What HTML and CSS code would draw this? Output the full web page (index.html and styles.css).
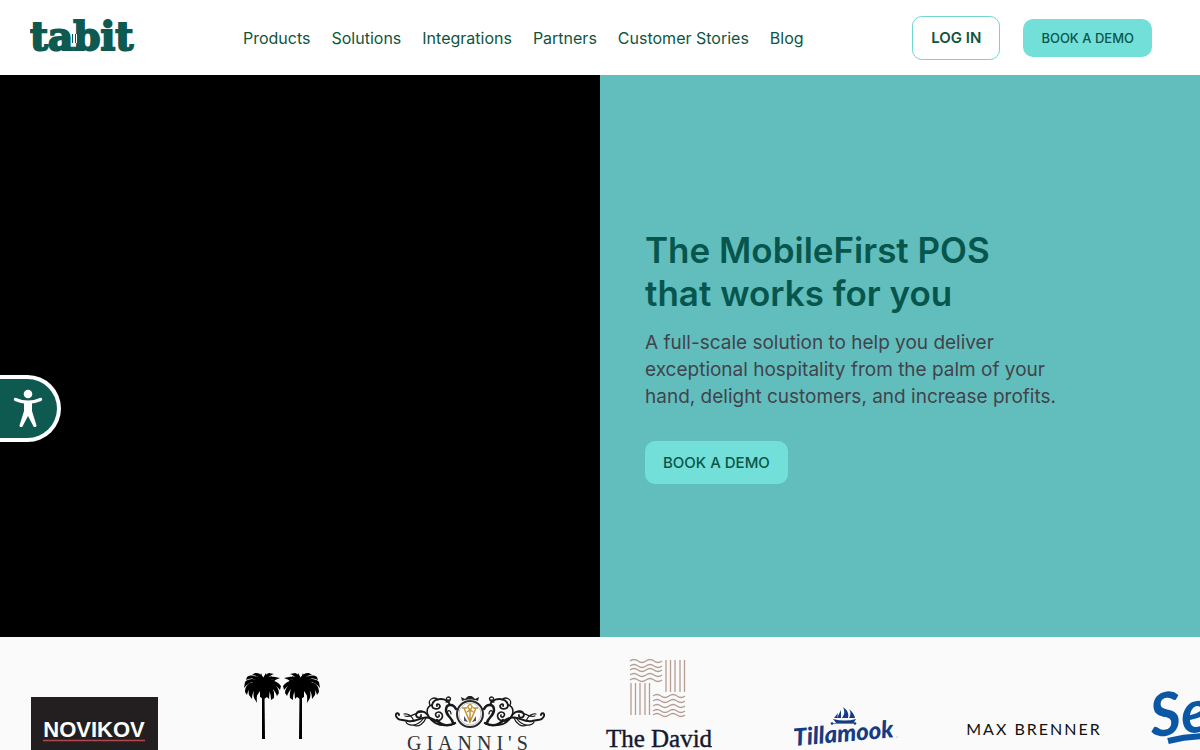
FILE: index.html
```html
<!DOCTYPE html>
<html lang="en">
<head>
    <meta charset="UTF-8">
    <meta name="viewport" content="width=device-width, initial-scale=1.0">
    <title>Tabit</title>
    <link rel="stylesheet" href="styles.css">
</head>
<body>
    <header class="header">
        <a class="logo" href="#" aria-label="tabit">
            <svg width="106" height="38" viewBox="0 0 106 38">
                <text class="logo-text" x="0" y="31">tabit</text>
                <path d="M44 15v9" stroke="#fff" stroke-width="6"/>
                <path d="M42.500 15v9M45.500 15v9" stroke="#0e5a51" stroke-width="1"/>
            </svg>
        </a>
        <nav class="nav">
            <a href="#">Products</a>
            <a href="#">Solutions</a>
            <a href="#">Integrations</a>
            <a href="#">Partners</a>
            <a href="#">Customer Stories</a>
            <a href="#">Blog</a>
        </nav>
        <div class="actions">
            <button class="btn btn-login">LOG IN</button>
            <button class="btn btn-small">BOOK A DEMO</button>
        </div>
    </header>

    <section class="hero">
        <div class="hero-video"></div>
        <div class="hero-text">
            <h1>The MobileFirst POS<br>that works for you</h1>
            <p>A full-scale solution to help you deliver<br>exceptional hospitality from the palm of your<br>hand, delight customers, and increase profits.</p>
            <button class="btn btn-demo">BOOK A DEMO</button>
        </div>
    </section>

    <section class="clients">
        <!-- Novikov -->
        <div class="client">
            <svg width="127" height="62" viewBox="0 0 127 62">
                <rect width="127" height="62" fill="#231f20"/>
                <text class="novikov" x="63" y="40" text-anchor="middle">NOVIKOV</text>
                <path d="M12 43.500h102" stroke="#b5474c" stroke-width="1.500"/>
            </svg>
        </div>
        <!-- Palms -->
        <div class="client">
            <svg width="76" height="112" viewBox="0 0 76 112">
                <defs>
                    <g id="palm">
                        <path d="M18 22h2.500l.5 45h-3z"/>
                        <circle cx="19" cy="14" r="6"/>
                        <path d="M16 16h7v9l-3 2-4-2z"/>
                        <path d="M19 15C18 7 14 3 8 3l3-2C17 0 21 6 22 14z"/>
                        <path d="M18 14C12 6 7 5 2 8l1-3C9 1 17 6 21 14z"/>
                        <path d="M19 13C12 9 5 9 0 16l1-6C6 5 14 7 21 12z"/>
                        <path d="M19 14C11 11 5 14 3 23L1 20C1 11 9 8 20 12z"/>
                        <path d="M19 15C12 13 8 19 8 27l-3-4C3 15 9 10 19 12z"/>
                        <path d="M20 15C14 15 12 23 13 31l-3-5C8 18 12 12 19 13z"/>
                        <path d="M18 15C18 7 20 3 25 1l5 1C24 4 22 8 22 15z"/>
                        <path d="M19 13C21 6 26 4 31 5l5 1-5 2C26 7 23 10 21 14z"/>
                        <path d="M19 13C26 6 32 8 37 14l-1 4C31 12 27 11 20 15z"/>
                        <path d="M19 13C28 8 34 13 35 21l-2 3C30 16 26 13 20 15z"/>
                        <path d="M19 14C27 12 31 18 30 26l-3 2C27 21 25 16 20 16z"/>
                        <path d="M19 15C24 14 26 20 25 27l-3-3z"/>
                        <path d="M13 6L11 4l5 1 1-4 2 5 3-5 1 5 5-2-2 4 6-1-3 4 7 1-5 2 4 5-6-3 1 7-4-5-1 6-3-5-4 8-2-8-4 6-1-7-5 4 2-6-6 1 5-4-6-1 7-1z"/>
                    </g>
                </defs>
                <use href="#palm"/>
                <use href="#palm" transform="translate(76 0) scale(-1 1)"/>
            </svg>
        </div>
        <!-- Gianni's -->
        <div class="client">
            <svg width="150" height="64" viewBox="0 0 150 64">
                <defs>
                    <g id="scroll" fill="none" stroke="#18181a" stroke-linecap="round">
                        <path stroke-width="2.500" d="M89 13C92 7 99 8 99 14C99 20 93 21 92 27M90 27C97 31 105 29 108 24"/>
                        <path stroke-width="1.800" d="M95 9C98 1 111 1 113 9C113 14 105 14 105 10C106 7 109 8 108 10"/>
                        <path stroke-width="1.300" d="M99 6C94 6 93 1 97 1C100 2 98 5 96 4M107 4C110 0 118 3 115 9"/>
                        <path stroke-width="1.800" d="M91 28C103 31 111 29 116 21C120 14 128 13 129 19C128 23 123 22 124 19"/>
                        <path stroke-width="1.600" d="M113 9C120 11 119 20 113 24C107 27 101 23 103 18C106 14 111 17 109 20C108 22 105 21 106 19"/>
                        <path stroke-width="2" d="M110 24C122 17 127 27 137 25C144 23 147 25 149 20C150 17 146 16 146 19"/>
                        <path stroke-width="1.200" d="M120 16C130 15 132 22 140 20M122 23C128 31 137 30 139 26M131 25C133 20 137 17 141 18M94 18C94 13 99 14 97 18M119 22C121 27 126 32 132 29"/>
                    </g>
                </defs>
                <use href="#scroll"/>
                <use href="#scroll" transform="translate(150 0) scale(-1 1)"/>
                <path d="M67 5l-1-4 4 2 2-2 3-2 3 2 2 2 4-2-1 4c-5-2-11-2-16 0z" fill="#222"/>
                <circle cx="75" cy="18" r="13" fill="#fff" stroke="#29292b" stroke-width="2"/>
                <circle cx="75" cy="18" r="11" fill="none" stroke="#999" stroke-width=".6"/>
                <path d="M67 12h5M78 12h5M69 12l6 14 6-14M75 15v10M75 8c-5 4 0 5 3 8M75 8c5 4 0 5-3 8" fill="none" stroke="#c39335" stroke-width="1.500"/>
                <path d="M69 20v5l4 1zM81 20v5l-4 1z" fill="#555269"/>
                <text class="giannis" x="12" y="54">GIANNI'S</text>
            </svg>
        </div>
        <!-- The David -->
        <div class="client">
            <svg width="108" height="138" viewBox="0 0 108 138">
                <g fill="none" stroke="#b49e94" stroke-width="1.300">
                    <path id="wave" d="M26 2q4-3 8 0t8 0 8 0 8 0"/>
                    <use href="#wave" y="5"/>
                    <use href="#wave" y="9"/>
                    <use href="#wave" y="14"/>
                    <use href="#wave" y="19"/>
                    <use href="#wave" x="23" y="35"/>
                    <use href="#wave" x="23" y="40"/>
                    <use href="#wave" x="23" y="45"/>
                    <use href="#wave" x="23" y="50"/>
                    <use href="#wave" x="23" y="54"/>
                    <path d="M62 1v32M66.500 1v32M71 1v32M76 1v32M80.500 1v32"/>
                    <path d="M27 24v32M31.500 24v32M36 24v32M41 24v32M45.500 24v32"/>
                </g>
                <text class="david" x="55" y="88" text-anchor="middle">The David</text>
            </svg>
        </div>
        <!-- Tillamook -->
        <div class="client">
            <svg width="104" height="42" viewBox="0 0 104 42">
                <g fill="#153b83">
                    <path d="M39 12q12 3 23 0l-3 5H43z"/>
                    <path d="M43 11l4-8v8zM48 11q4-5 1-11 7 5 5 11zM55 11q3-5 0-9 5 4 6 9zM40 11l4-5-1 5z"/>
                    <path d="M38 16h23v1H38z" fill="#7186af"/>
                    <circle cx="38" cy="16.500" r="1.300"/>
                    <circle cx="61" cy="16.500" r="1.300"/>
                </g>
                <text class="tillamook" x="0" y="39" transform="rotate(-5 0 39)">Tillamook</text>
                <circle cx="103" cy="30" r=".6" fill="#8b9abb"/>
            </svg>
        </div>
        <!-- Max Brenner -->
        <div class="client">
            <span class="brenner">MAX BRENNER</span>
        </div>
        <div class="client">
            <svg width="144" height="80" viewBox="0 0 144 80">
                <text class="script-logo" x="2" y="49" transform="rotate(-6 2 49)">Se</text>
                <path d="M18 53Q46 46 78 49" fill="none" stroke="#0957a5" stroke-width="6"/>
            </svg>
        </div>
    </section>

    <button class="accessibility" aria-label="Accessibility">
        <svg width="30" height="40" viewBox="0 0 30 40">
            <circle cx="15" cy="5" r="4.300" fill="#fff"/>
            <path d="M2.500 10.500Q15 16 27.500 10.500" fill="none" stroke="#fff" stroke-width="3.400" stroke-linecap="round"/>
            <path d="M11 12h8v10l4.500 14.500c0 2-3 2-3.500 0L15 27l-5 9.500c-.5 2-3.500 2-3.500 0L11 22z" fill="#fff"/>
        </svg>
    </button>
</body>
</html>
```

FILE: styles.css
```css
* {
  box-sizing: border-box;
}

body {
  margin: 0;
  font-family: Inter, "Open Sans", sans-serif;
  background-color: #fff;
  color: #0e5a51;
}

.header {
  display: flex;
  align-items: center;
  height: 75px;
  padding: 0 48px 0 30px;
}

.logo {
  display: flex;
}

.logo-text {
  font-family: "DejaVu Serif", serif;
  font-weight: bold;
  font-size: 39px;
  fill: #0e5a51;
  stroke: #0e5a51;
  stroke-width: 2px;
}

.nav {
  display: flex;
  gap: 21px;
  margin-left: 107px;
}

.nav a {
  font-size: 16px;
  line-height: 24px;
  color: #0f5540;
  text-decoration: none;
  white-space: nowrap;
}

.actions {
  display: flex;
  align-items: center;
  gap: 23px;
  margin-left: auto;
}

.btn {
  font-family: inherit;
  font-weight: 500;
  color: #0b5549;
  background-color: #72dfd8;
  border: none;
  border-radius: 10px;
  white-space: nowrap;
  cursor: pointer;
}

.btn-login {
  height: 44px;
  padding: 0 18px;
  font-size: 15px;
  font-weight: 600;
  color: #0f5540;
  background-color: #fff;
  border: 1px solid #72d5cf;
}

.btn-small {
  height: 38px;
  padding: 0 18px;
  font-size: 13px;
}

.btn-demo {
  height: 43px;
  padding: 0 18px;
  font-size: 15px;
}

.hero {
  display: grid;
  grid-template-columns: 1fr 1fr;
  min-height: 562px;
}

.hero-video {
  background-color: #000;
}

.hero-text {
  display: flex;
  flex-direction: column;
  justify-content: center;
  align-items: flex-start;
  padding: 0 45px;
  background-color: #61bebc;
}

.hero-text h1 {
  margin: 0;
  font-size: 35px;
  line-height: 43px;
  font-weight: 600;
  color: #07564d;
}

.hero-text p {
  margin: 14px 0 31px;
  font-size: 19px;
  line-height: 27px;
  color: #42434c;
}

.clients {
  display: flex;
  align-items: center;
  height: 182px;
  overflow: hidden;
  background-color: #fafafa;
}

.client {
  display: flex;
  justify-content: center;
  flex: 0 0 188px;
}

.novikov {
  font-family: "Liberation Sans", sans-serif;
  font-weight: bold;
  font-size: 22px;
  fill: #fff;
}

.giannis {
  font-family: "Liberation Serif", serif;
  font-size: 20px;
  letter-spacing: 5px;
  fill: #333;
}

.david {
  font-family: "Liberation Serif", serif;
  font-size: 25px;
  fill: #15182f;
  stroke: #15182f;
  stroke-width: 0.4px;
}

.tillamook {
  font-family: Lato, sans-serif;
  font-weight: 900;
  font-style: italic;
  font-size: 24px;
  fill: #153b83;
}

.brenner {
  font-family: Lato, sans-serif;
  font-size: 16px;
  letter-spacing: 2px;
  color: #111;
}

.script-logo {
  font-family: Lato, sans-serif;
  font-weight: bold;
  font-style: italic;
  font-size: 60px;
  fill: #0957a5;
}

.accessibility {
  position: fixed;
  left: 0;
  top: 50%;
  display: flex;
  align-items: center;
  width: 61px;
  height: 67px;
  padding: 0 0 0 13px;
  background-color: #0e5a51;
  border: 4px solid #fff;
  border-left: none;
  border-radius: 0 34px 34px 0;
  cursor: pointer;
}
```
